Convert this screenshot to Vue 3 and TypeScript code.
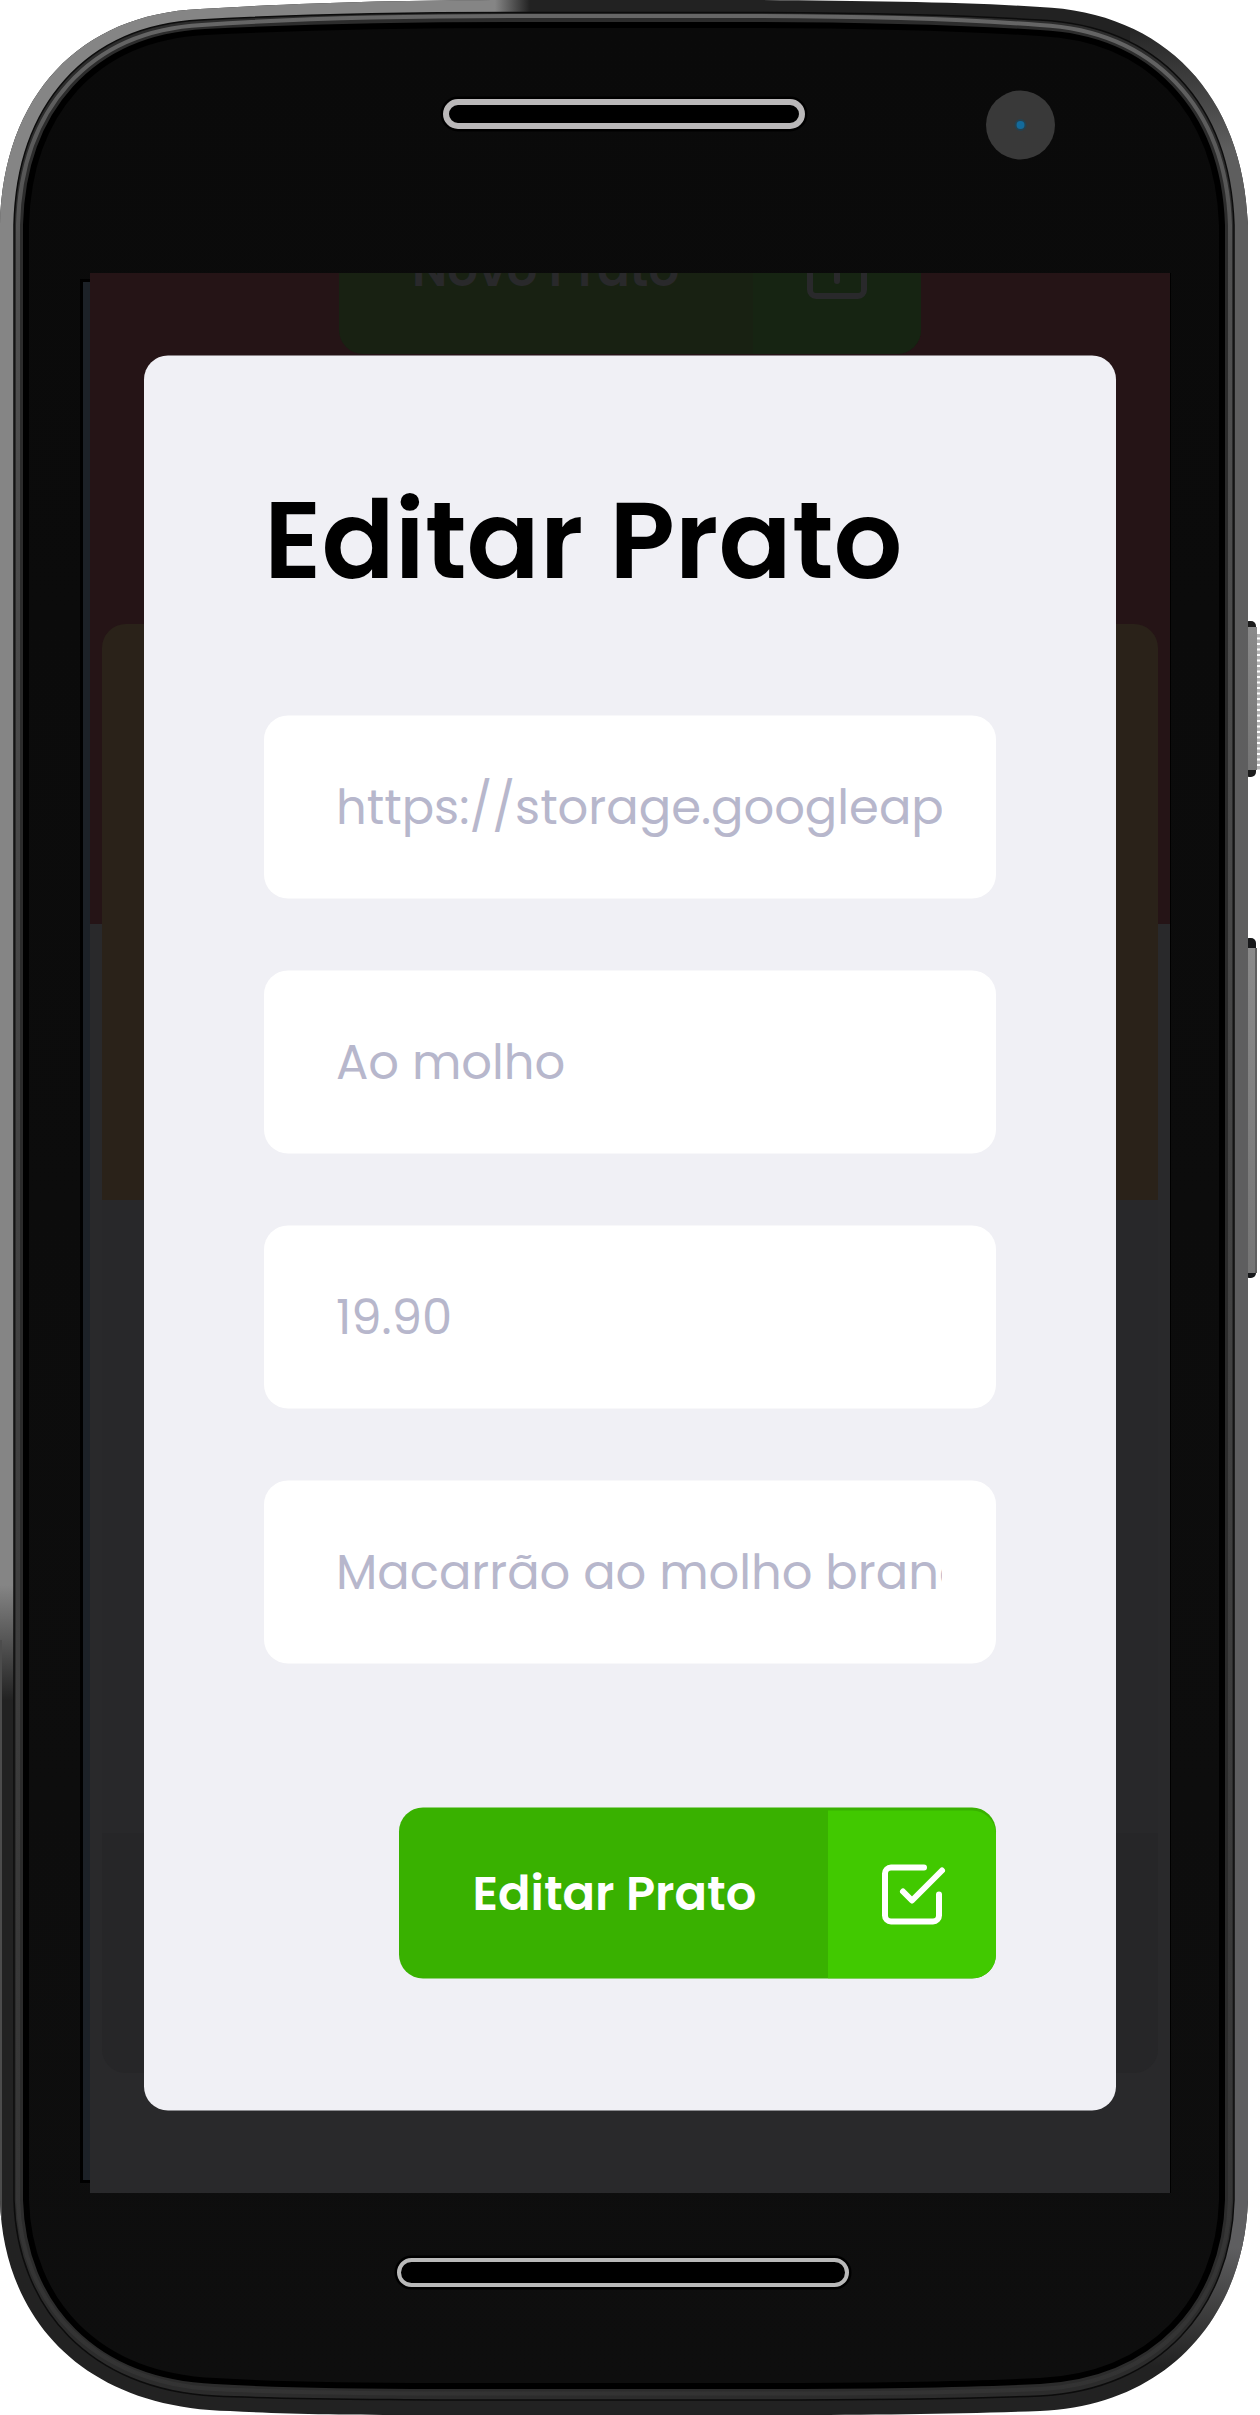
<script setup lang="ts">
interface Field {
  name: string
  placeholder: string
}

const fields: Field[] = [
  { name: 'image', placeholder: 'https://storage.googleapis.com' },
  { name: 'title', placeholder: 'Ao molho' },
  { name: 'price', placeholder: '19.90' },
  { name: 'description', placeholder: 'Macarrão ao molho branco' },
]

const gripLines: number[] = Array.from({ length: 25 }, (_, i) => 634 + i * 5.5)
</script>

<template>
  <div class="device">
    <svg class="shell" viewBox="0 0 1260 2415" aria-hidden="true">
      <defs>
        <clipPath id="body">
          <path d="M0 225 C3 95 80 14 200 9 C300 3 400 0 520 0 L760 0 C870 1 965 2 1040 7 C1165 12 1243 95 1248 225 L1248 2200 C1244 2316 1168 2406 1040 2411 C960 2414 880 2415 780 2415 L420 2415 C340 2415 280 2414 230 2411 C80 2408 3 2316 0 2200 Z" />
        </clipPath>
        <linearGradient id="topFade" gradientUnits="userSpaceOnUse" x1="495" y1="0" x2="530" y2="0">
          <stop offset="0" stop-color="#858585" />
          <stop offset="1" stop-color="#858585" stop-opacity="0" />
        </linearGradient>
        <linearGradient id="leftFade" gradientUnits="userSpaceOnUse" x1="0" y1="1585" x2="0" y2="1700">
          <stop offset="0" stop-color="#858585" />
          <stop offset="1" stop-color="#858585" stop-opacity="0" />
        </linearGradient>
        <linearGradient id="rightFade" gradientUnits="userSpaceOnUse" x1="0" y1="20" x2="0" y2="2390">
          <stop offset="0" stop-color="#5e5e5e" stop-opacity="0" />
          <stop offset=".055" stop-color="#5e5e5e" />
          <stop offset=".94" stop-color="#5e5e60" />
          <stop offset=".99" stop-color="#5e5e5e" stop-opacity="0" />
        </linearGradient>
        <linearGradient id="ring" x1="0" y1="0" x2="0" y2="1">
          <stop offset="0" stop-color="#666" />
          <stop offset=".1" stop-color="#505050" />
          <stop offset="1" stop-color="#333" />
        </linearGradient>
        <linearGradient id="glass" x1="0" y1="0" x2="0" y2="1">
          <stop offset="0" stop-color="#0a0a0a" />
          <stop offset="1" stop-color="#0e0e0e" />
        </linearGradient>
        <linearGradient id="key" x1="0" y1="0" x2="0" y2="1">
          <stop offset="0" stop-color="#8a8a8a" />
          <stop offset="1" stop-color="#757575" />
        </linearGradient>
      </defs>

      <g>
        <rect x="1244" y="621" width="12" height="156" rx="5" fill="#1b1b1b" />
        <rect x="1248" y="627" width="9" height="143" fill="url(#key)" />
        <rect v-for="y in gripLines" :key="y" x="1257" :y="y" width="3" height="3.5" fill="#b3b3b3" />
        <rect x="1244" y="938" width="12" height="340" rx="5" fill="#17181a" />
        <rect x="1248" y="948" width="9" height="325" fill="url(#key)" />
        <rect x="1255" y="948" width="2" height="325" fill="#606060" />
      </g>

      <g clip-path="url(#body)">
        <rect width="1260" height="2415" fill="#222" />
        <rect width="530" height="240" fill="url(#topFade)" />
        <rect y="240" width="40" height="1460" fill="url(#leftFade)" />
        <rect y="1640" width="2" height="580" fill="#4c4c4c" />
        <rect x="1130" y="20" width="130" height="2370" fill="url(#rightFade)" />
      </g>

      <path
        d="M14 225 C17 105 86 26 200 20 C300 14 420 12.500 520 12.500 L740 12.500 C860 13 960 15 1040 20 C1158 26 1230 103 1234 225 L1234 2200 C1231 2308 1160 2390 1040 2396 C960 2399 880 2400 760 2400 L440 2400 C340 2399 280 2399 215 2396 C90 2390 17 2308 14 2200 Z"
        fill="#2c2c2c" stroke="#0c0c0c" stroke-width="1.500"
      />
      <path
        d="M18 225 C21 109 89 31 202 25 C300 18 420 16 520 16 L740 16 C860 16 960 19 1040 25 C1153 31 1226 106 1230 225 L1230 2200 C1227 2304 1157 2383 1040 2389 C960 2392.500 880 2393.500 760 2393.500 L440 2393.500 C340 2393 280 2392.500 215 2389 C93 2383 21 2304 18 2200 Z"
        fill="none" stroke="url(#ring)" stroke-width="4"
      />
      <path
        d="M26 225 C29 113 94 38 205 32 C300 27 420 25 520 25 L740 25 C860 25 960 28 1040 33 C1148 38 1218 110 1222 225 L1222 2200 C1219 2302 1152 2375 1040 2381 C960 2385 880 2386 760 2386 L440 2386 C340 2386 280 2385 215 2381 C97 2376 29 2302 26 2200 Z"
        fill="url(#glass)" stroke="#000" stroke-width="6"
      />

      <g fill="#000" stroke="#000">
        <rect x="443" y="99" width="362" height="30" rx="15" stroke-width="5" />
        <rect x="397" y="2258" width="452" height="29" rx="14.500" stroke-width="5" />
      </g>
      <rect x="446" y="102" width="356" height="24" rx="12" fill="#000" stroke="#bab8b9" stroke-width="6" />
      <rect x="399" y="2260" width="448" height="25" rx="12.500" fill="#000" stroke="#b9b9b9" stroke-width="4" />
      <circle cx="1020.500" cy="125" r="34.500" fill="#393939" />
      <circle cx="1020.500" cy="125" r="6" fill="#25414f" />
      <circle cx="1020.500" cy="125" r="4" fill="#136a9b" />

      <rect x="80" y="279" width="10" height="1904" fill="#000" />
      <rect x="83" y="282" width="7" height="1898" fill="#1c2127" />
      <rect x="1170" y="273" width="1" height="1920" fill="#000" />
    </svg>

    <main class="screen">
      <div class="backdrop">
        <header class="hero">
          <div class="new-button">
            <span class="new-label">Novo Prato</span>
            <span class="new-icon">
              <svg class="icon" viewBox="0 0 24 24" aria-hidden="true">
                <rect x="3" y="3" width="18" height="18" rx="2" />
                <path d="M12 8v8M8 12h8" />
              </svg>
            </span>
          </div>
        </header>
        <article class="dish">
          <div class="dish-photo"></div>
          <div class="dish-body"></div>
          <div class="dish-footer"></div>
        </article>
      </div>

      <form class="modal" @submit.prevent>
        <h1>Editar Prato</h1>
        <div class="fields">
          <input
            v-for="field in fields"
            :key="field.name"
            class="field"
            :name="field.name"
            :placeholder="field.placeholder"
            type="text"
          />
        </div>
        <button class="submit" type="submit">
          <span class="submit-label">Editar Prato</span>
          <span class="submit-icon">
            <svg class="icon" viewBox="0 0 24 24" aria-hidden="true">
              <polyline points="9 11 12 14 22 4" />
              <path d="M21 12v7a2 2 0 0 1-2 2H5a2 2 0 0 1-2-2V5a2 2 0 0 1 2-2h11" />
            </svg>
          </span>
        </button>
      </form>
    </main>
  </div>
</template>

<style>
body {
  margin: 0;
  background: #fff;
}
</style>

<style scoped>
* {
  box-sizing: border-box;
}

.device {
  position: relative;
  width: 1260px;
  height: 2415px;
  padding: 273px 90px 222px;
  overflow: hidden;
  background: #fff;
  font-family: Poppins, Inter, sans-serif;
}

.shell {
  position: absolute;
  inset: 0;
  width: 1260px;
  height: 2415px;
}

.screen {
  position: relative;
  display: flex;
  align-items: center;
  justify-content: center;
  width: 1080px;
  height: 1920px;
  overflow: hidden;
  background: #29292b;
}

.backdrop {
  position: absolute;
  inset: 0;
}

.hero {
  display: flex;
  align-items: flex-start;
  justify-content: center;
  height: 651px;
  background: #251416;
}

.new-button {
  display: flex;
  width: 582px;
  height: 171px;
  margin-top: -90px;
  overflow: hidden;
  border-radius: 24px;
  background: #182112;
  color: #29292b;
}

.new-label {
  display: flex;
  flex: 1;
  align-items: center;
  padding: 3px 0 0 73px;
  font-size: 48px;
  font-weight: 600;
  white-space: nowrap;
}

.new-icon {
  display: flex;
  align-items: center;
  justify-content: center;
  width: 168px;
  background: #162412;
}

.icon {
  display: block;
  width: 72px;
  height: 72px;
  fill: none;
  stroke: currentColor;
  stroke-width: 2;
  stroke-linecap: round;
  stroke-linejoin: round;
}

.dish {
  width: 1056px;
  margin: -300px auto 0;
}

.dish-photo {
  height: 576px;
  border-radius: 24px 24px 0 0;
  background: #2a2219;
}

.dish-body {
  height: 633px;
  background: #28282a;
}

.dish-footer {
  height: 240px;
  border-radius: 0 0 24px 24px;
  background: #262628;
}

.modal {
  position: relative;
  display: flex;
  flex-direction: column;
  width: 972px;
  height: 1755px;
  margin-bottom: 1px;
  padding: 108px 120px 132px;
  border-radius: 24px;
  background: #f0f0f5;
  transform: translateY(0.5px);
}

h1 {
  height: 156px;
  margin: 0;
  color: #000;
  font-size: 108px;
  font-weight: 600;
  line-height: 154px;
  white-space: nowrap;
}

.fields {
  display: flex;
  flex-direction: column;
  gap: 72px;
  margin-top: 96px;
}

.field {
  display: block;
  width: 732px;
  height: 183px;
  padding: 0 54px 0 72px;
  border: 0;
  border-radius: 24px;
  outline: 0;
  background: #fff;
  font-family: inherit;
  font-size: 48px;
}

.field::placeholder {
  color: #b7b7cc;
  opacity: 1;
}

.submit {
  display: flex;
  align-self: flex-end;
  width: 597px;
  height: 171px;
  margin-top: 144px;
  padding: 0;
  overflow: hidden;
  border: 0;
  border-radius: 24px;
  background: #39b100;
  color: #fff;
  font-family: inherit;
}

.submit-label {
  display: flex;
  flex: 1;
  align-items: center;
  height: 171px;
  padding-left: 73.5px;
  font-size: 48px;
  font-weight: 600;
  white-space: nowrap;
}

.submit-icon {
  display: flex;
  align-items: center;
  justify-content: center;
  width: 168px;
  height: 168px;
  margin-top: 3px;
  border-radius: 0 24px 0 0;
  background: #41c900;
}
</style>
